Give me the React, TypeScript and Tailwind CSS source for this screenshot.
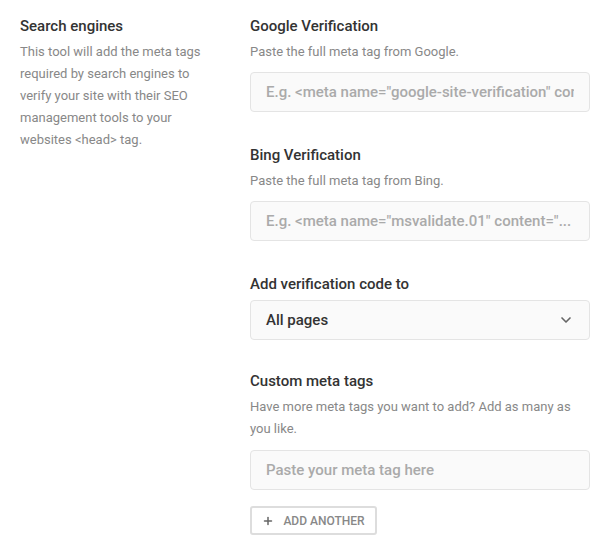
import { ChevronDown, Plus } from "lucide-react";

const font = { fontFamily: "Roboto, 'Noto Sans', sans-serif" };

function Field({ title, desc, children }: { title: string; desc?: string; children: React.ReactNode }) {
  return (
    <div className="mb-[33px]">
      <h3 className="text-[15px] leading-[20px] font-medium text-[#333]">{title}</h3>
      {desc ? <p className="mt-[5px] mb-[9px] text-[13px] leading-[22px] text-[#888]">{desc}</p> : <div className="h-[6px]" />}
      {children}
    </div>
  );
}

function TextInput({ placeholder }: { placeholder: string }) {
  return (
    <input
      placeholder={placeholder}
      className="w-full h-[40px] px-[15px] rounded-[4px] border border-[#e4e4e4] bg-[#fafafa] text-[15px] font-medium text-[#333] placeholder:text-[#aaa] outline-none"
      style={font}
    />
  );
}

export default function App() {
  return (
    <div className="bg-white w-[610px] h-[555px] px-5 pt-4 flex gap-[30px]" style={font}>
      <div className="w-[200px]">
        <h2 className="text-[15px] leading-[20px] font-medium text-[#333]">Search engines</h2>
        <p className="mt-[5px] text-[13px] leading-[22px] text-[#888]">
          This tool will add the meta tags required by search engines to verify your site with their SEO management tools to your websites &lt;head&gt; tag.
        </p>
      </div>
      <div className="w-[340px]">
        <Field title="Google Verification" desc="Paste the full meta tag from Google.">
          <TextInput placeholder={'E.g. <meta name="google-site-verification" content="...'} />
        </Field>
        <Field title="Bing Verification" desc="Paste the full meta tag from Bing.">
          <TextInput placeholder={'E.g. <meta name="msvalidate.01" content="...'} />
        </Field>
        <div className="mb-[31px]">
          <h3 className="text-[15px] leading-[20px] font-medium text-[#333]">Add verification code to</h3>
          <div className="mt-[6px] h-[40px] px-[15px] flex items-center justify-between rounded-[4px] border border-[#e4e4e4] bg-[#fafafa]">
            <span className="text-[15px] font-medium text-[#333]">All pages</span>
            <ChevronDown className="w-4 h-4 text-[#666]" strokeWidth={2.5} />
          </div>
        </div>
        <div>
          <h3 className="text-[15px] leading-[20px] font-medium text-[#333]">Custom meta tags</h3>
          <p className="mt-[5px] mb-[10px] text-[13px] leading-[22px] text-[#888]">
            Have more meta tags you want to add? Add as many as you like.
          </p>
          <TextInput placeholder="Paste your meta tag here" />
          <button className="mt-4 h-[29px] w-[127px] flex items-center justify-center gap-[9px] rounded-[3px] border-2 border-[#ddd] bg-white text-[12px] font-medium text-[#888]">
            <Plus className="w-3 h-3 text-[#666]" strokeWidth={3} />
            ADD ANOTHER
          </button>
        </div>
      </div>
    </div>
  );
}
